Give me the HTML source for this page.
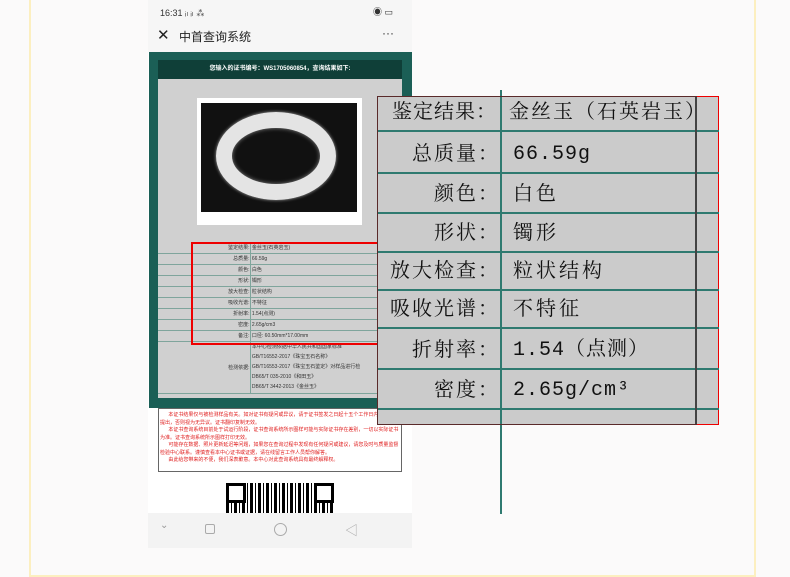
<!DOCTYPE html>
<html><head><meta charset="utf-8"><style>
*{margin:0;padding:0;box-sizing:border-box}
body{width:790px;height:577px;background:#fbfafa;position:relative;overflow:hidden;font-family:"Liberation Sans","Noto Sans CJK SC",sans-serif}
.a{position:absolute}
.frame{left:29px;top:-5px;width:727px;height:582px;border:2px solid #fcefc0}
.phone{left:148px;top:0;width:264px;height:548px;background:#fff}
.tr td{height:11px;border-bottom:1px solid #7fa59c;font-size:5px;color:#333;white-space:nowrap}
.ov{left:377px;top:96px;width:342px;height:329px;background:#cbcbcb;border:1px solid #e00}
.row{position:absolute;left:0;width:341px;border-bottom:2px solid #2f7a70;font-family:"Liberation Serif","Noto Serif CJK SC",serif;font-size:20px;color:#111}
.row .l{position:absolute;right:219px;bottom:6px;white-space:nowrap;letter-spacing:2px}
.row .r{position:absolute;left:135px;bottom:6px;white-space:nowrap;font-family:"Liberation Mono","Noto Serif CJK SC",serif;letter-spacing:1px}
.row .s{font-family:"Liberation Serif","Noto Serif CJK SC",serif;letter-spacing:3px}
</style></head><body>
<div class="a frame"></div>
<div class="a phone">
  <div class="a" style="left:0;top:0;width:264px;height:52px;background:#f6f6f6"></div>
  <div class="a" style="left:12px;top:6px;font-size:9px;color:#333">16:31 ᵢₗ ᵢₗ ⁂</div>
  <div class="a" style="left:225px;top:5px;font-size:9px;color:#333">◉ ▭</div>
  <div class="a" style="left:9px;top:26px;font-size:15px;color:#222">✕</div>
  <div class="a" style="left:31px;top:28px;font-size:12px;color:#222">中首查询系统</div>
  <div class="a" style="left:234px;top:26px;font-size:12px;color:#333">···</div>
  <div class="a" style="left:1px;top:52px;width:263px;height:356px;background:#1b5f56"></div>
  <div class="a" style="left:10px;top:60px;width:244px;height:19px;background:#0f3f38;color:#fff;font-size:6px;text-align:center;line-height:19px;font-weight:bold">您输入的证书编号：WS1705060854，查询结果如下:</div>
  <div class="a" style="left:10px;top:79px;width:244px;height:319px;background:#d0d0d0"></div>
  <div class="a" style="left:49px;top:98px;width:165px;height:127px;background:#fff"></div>
  <div class="a" style="left:53px;top:103px;width:156px;height:109px;background:#111"></div>
  <div class="a" style="left:68px;top:112px;width:120px;height:88px;border-radius:50%;border:16px solid #e4e4e4;box-shadow:inset 0 0 4px #888,0 0 3px #aaa"></div>
  <table class="a" style="left:10px;top:242px;width:244px;border-collapse:collapse">
  <tr class="tr"><td style="width:92px;text-align:right;border-right:1px solid #7fa59c">鉴定结果:</td><td>&nbsp;金丝玉(石英岩玉)</td></tr>
  <tr class="tr"><td style="text-align:right;border-right:1px solid #7fa59c">总质量:</td><td>&nbsp;66.59g</td></tr>
  <tr class="tr"><td style="text-align:right;border-right:1px solid #7fa59c">颜色:</td><td>&nbsp;白色</td></tr>
  <tr class="tr"><td style="text-align:right;border-right:1px solid #7fa59c">形状:</td><td>&nbsp;镯形</td></tr>
  <tr class="tr"><td style="text-align:right;border-right:1px solid #7fa59c">放大检查:</td><td>&nbsp;粒状结构</td></tr>
  <tr class="tr"><td style="text-align:right;border-right:1px solid #7fa59c">吸收光谱:</td><td>&nbsp;不特征</td></tr>
  <tr class="tr"><td style="text-align:right;border-right:1px solid #7fa59c">折射率:</td><td>&nbsp;1.54(点测)</td></tr>
  <tr class="tr"><td style="text-align:right;border-right:1px solid #7fa59c">密度:</td><td>&nbsp;2.65g/cm3</td></tr>
  <tr class="tr"><td style="text-align:right;border-right:1px solid #7fa59c">备注:</td><td>&nbsp;口径: 60.50mm*17.00mm</td></tr>
  <tr class="tr"><td style="text-align:right;border-right:1px solid #7fa59c;height:52px">检测依据:</td><td style="line-height:10px">&nbsp;本中心检测依据中华人民共和国国家标准<br>&nbsp;GB/T16552-2017《珠宝玉石名称》<br>&nbsp;GB/T16553-2017《珠宝玉石鉴定》对样品进行检<br>&nbsp;DB65/T 035-2010《和田玉》<br>&nbsp;DB65/T 3442-2013《金丝玉》</td></tr>
  </table>
  <div class="a" style="left:43px;top:242px;width:190px;height:103px;border:2px solid #e00"></div>
  <div class="a" style="left:10px;top:408px;width:244px;height:64px;border:1px solid #666;background:#fff;color:#e02020;font-size:5px;line-height:7.5px;padding:3px 1px;overflow:hidden">&nbsp;&nbsp;&nbsp;&nbsp;&nbsp;&nbsp;本证书结果仅与被检测样品有关。如对证书有疑问或异议，请于证书签发之日起十五个工作日内向本中心提出，否则视为无异议。证书翻印复制无效。<br>&nbsp;&nbsp;&nbsp;&nbsp;&nbsp;&nbsp;本证书查询系统目前处于试运行阶段，证书查询系统所示图样可能与实际证书存在差别，一切以实际证书为准。证书查询系统所示图样打印无效。<br>&nbsp;&nbsp;&nbsp;&nbsp;&nbsp;&nbsp;可能存在数据、照片更新延迟等问题，如果您在查询过程中发现有任何疑问或建议，请您及时与质量监督检验中心联系。谨慎查看本中心证书或证据，请在线留言工作人员帮你解答。<br>&nbsp;&nbsp;&nbsp;&nbsp;&nbsp;&nbsp;由此给您带来的不便，我们深表歉意。本中心对此查询系统具有最终解释权。</div>
  <div class="a" style="left:78px;top:483px;width:108px;height:30px;background:repeating-linear-gradient(90deg,#000 0 3px,#fff 3px 5px,#000 5px 6px,#fff 6px 8px)"></div>
  <div class="a" style="left:78px;top:483px;width:20px;height:20px;border:3px solid #000;background:#fff"></div>
  <div class="a" style="left:166px;top:483px;width:20px;height:20px;border:3px solid #000;background:#fff"></div>
  <div class="a" style="left:0;top:513px;width:264px;height:35px;background:#f3f3f3;color:#999"></div>
  <div class="a" style="left:12px;top:520px;font-size:10px;color:#999">⌄</div>
  <div class="a" style="left:57px;top:524px;width:10px;height:10px;border:1px solid #aaa;border-radius:2px"></div>
  <div class="a" style="left:126px;top:523px;width:13px;height:13px;border:1px solid #aaa;border-radius:50%"></div>
  <div class="a" style="left:197px;top:520px;font-size:13px;color:#aaa">◁</div>
</div>
<div class="a ov">
  <div class="row" style="top:0;height:35px"><span class="l" style="right:222px;letter-spacing:1px">鉴定结果：</span><span class="r s" style="left:131px;letter-spacing:2px">金丝玉（石英岩玉）</span></div>
  <div class="row" style="top:35px;height:42px"><span class="l">总质量：</span><span class="r">66.59g</span></div>
  <div class="row" style="top:77px;height:40px"><span class="l">颜色：</span><span class="r s">白色</span></div>
  <div class="row" style="top:117px;height:39px"><span class="l">形状：</span><span class="r s">镯形</span></div>
  <div class="row" style="top:156px;height:38px"><span class="l">放大检查：</span><span class="r s">粒状结构</span></div>
  <div class="row" style="top:194px;height:38px"><span class="l">吸收光谱：</span><span class="r s">不特征</span></div>
  <div class="row" style="top:232px;height:41px"><span class="l">折射率：</span><span class="r">1.54（点测）</span></div>
  <div class="row" style="top:273px;height:40px"><span class="l">密度：</span><span class="r">2.65g/cm³</span></div>
  <div class="a" style="left:317px;top:0;width:2px;height:328px;background:#444"></div>
</div>
<div class="a" style="left:500px;top:90px;width:2px;height:424px;background:#2f7a70"></div>
<div class="a" style="left:377px;top:96px;width:320px;height:329px;border:1px solid #5a2a2a;border-right:none"></div>
</body></html>
